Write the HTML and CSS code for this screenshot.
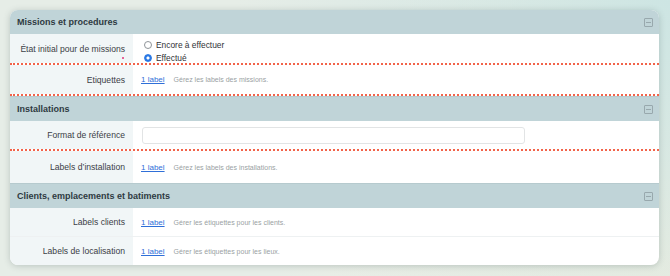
FILE: index.html
```html
<!DOCTYPE html>
<html lang="fr">

<head>
    <meta charset="UTF-8">
    <title>Paramètres</title>
    <link rel="stylesheet" href="styles.css">
</head>

<body>
    <div class="card">
        <!-- Missions -->
        <div class="group-head">
            <h2>Missions et procedures</h2>
            <span class="toggle"></span>
        </div>
        <div class="row flagged">
            <div class="label">État initial pour de missions<span class="req"></span></div>
            <div class="value radios">
                <label class="radio"><span class="dot"></span>Encore à effectuer</label>
                <label class="radio"><span class="dot checked"></span>Effectué</label>
            </div>
        </div>
        <div class="row flagged wide">
            <div class="label">Etiquettes</div>
            <div class="value"><a href="#">1 label</a><span class="hint">Gérez les labels des missions.</span></div>
        </div>

        <!-- Installations -->
        <div class="group-head">
            <h2>Installations</h2>
            <span class="toggle"></span>
        </div>
        <div class="row flagged">
            <div class="label">Format de référence</div>
            <div class="value"><input type="text" class="field"></div>
        </div>
        <div class="row tall">
            <div class="label">Labels d’installation</div>
            <div class="value"><a href="#">1 label</a><span class="hint">Gérez les labels des installations.</span></div>
        </div>

        <!-- Clients -->
        <div class="group-head">
            <h2>Clients, emplacements et batiments</h2>
            <span class="toggle"></span>
        </div>
        <div class="row lined">
            <div class="label">Labels clients</div>
            <div class="value"><a href="#">1 label</a><span class="hint">Gérer les étiquettes pour les clients.</span></div>
        </div>
        <div class="row last">
            <div class="label">Labels de localisation</div>
            <div class="value"><a href="#">1 label</a><span class="hint">Gérer les étiquettes pour les lieux.</span></div>
        </div>
    </div>
</body>

</html>
```

FILE: styles.css
```css
* {
    box-sizing: border-box;
}

body {
    margin: 0;
    padding: 10px 11px 10px 10px;
    font-family: "Liberation Sans", Arial, sans-serif;
    color: #3a3f44;
    background:
        radial-gradient(circle at 100% 0%, #cde5e3 0%, rgba(205, 229, 227, 0) 60%),
        radial-gradient(circle at 100% 100%, #f1eedf 0%, rgba(241, 238, 223, 0) 55%),
        #e6ede7;
    height: 276px;
    overflow: hidden;
}

.card {
    background: white;
    border-radius: 8px;
    overflow: hidden;
    box-shadow: 0 1px 6px rgba(60, 80, 80, 0.25);
}

.group-head {
    display: flex;
    align-items: center;
    justify-content: space-between;
    height: 25px;
    padding: 0 6px 0 7px;
    background-color: #c0d4d8;
    border-top: 1px solid #b6cace;
}

.group-head:first-child {
    height: 24px;
    border-top: none;
}

.group-head h2 {
    margin: 0;
    font-size: 9px;
    font-weight: bold;
    color: #2e3a42;
}

.toggle {
    position: relative;
    width: 9px;
    height: 9px;
    border: 1px solid #98a8ad;
    border-radius: 1px;
}

.toggle::after {
    content: "";
    position: absolute;
    left: 1px;
    right: 1px;
    top: 3px;
    height: 1px;
    background-color: #98a8ad;
}

.row {
    display: grid;
    grid-template-columns: 123px 1fr;
    min-height: 30px;
}

.row.flagged {
    border-bottom: 2px dotted #f2634a;
}

.row.wide {
    min-height: 31px;
}

.row.tall {
    min-height: 32px;
}

.row.lined {
    min-height: 29px;
    border-bottom: 1px solid #eef1f2;
}

.row.last {
    min-height: 28px;
}

.label {
    position: relative;
    display: flex;
    align-items: center;
    justify-content: flex-end;
    padding-right: 8px;
    background-color: #f1f6f7;
    font-size: 8.6px;
    color: #3b4046;
}

.req {
    position: absolute;
    right: 9px;
    bottom: 4px;
    width: 2px;
    height: 2px;
    border-radius: 50%;
    background-color: #e2357a;
}

.value {
    display: flex;
    align-items: center;
    padding-left: 8px;
    font-size: 7px;
}

.value a {
    font-size: 8px;
    color: #2f6fd8;
    text-decoration: underline;
    margin-right: 9px;
}

.hint {
    color: #9a9fa3;
}

.radios {
    flex-direction: column;
    align-items: flex-start;
    justify-content: center;
    gap: 3px;
    padding-top: 6px;
    padding-left: 11px;
}

.radio {
    display: flex;
    align-items: center;
    font-size: 8.4px;
    color: #2f3337;
}

.dot {
    width: 8px;
    height: 8px;
    margin-right: 4px;
    border: 1px solid #8f9499;
    border-radius: 50%;
    background: white;
}

.dot.checked {
    border-color: #2a78e4;
    background: radial-gradient(circle, white 0 1.3px, #2a78e4 1.8px);
}

.field {
    width: 383px;
    height: 17px;
    margin: 0 0 0 1px;
    border: 1.5px solid #e2e4e5;
    border-radius: 3px;
    background: white;
}
```
